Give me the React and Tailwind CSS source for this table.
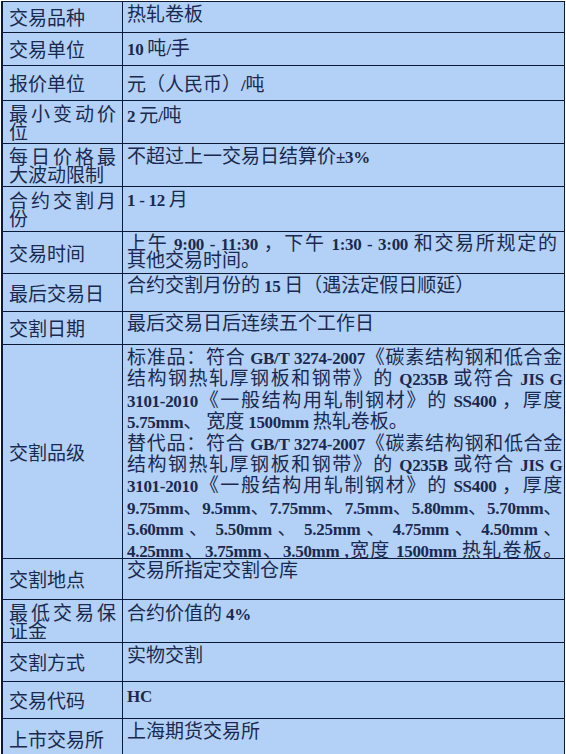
const J = (text) => ({ text, justify: true })

const rows = [
  { label: ['交易品种'], h: 'h-[31px]', pt: 'pt-[1px]', lines: ['热轧卷板'] },
  { label: ['交易单位'], h: 'h-[33px]', pt: 'pt-[4px]', lines: ['10 吨/手'] },
  { label: ['报价单位'], h: 'h-[35px]', pt: 'pt-[7px]', lines: ['元（人民币）/吨'] },
  { label: ['最小变动价', '位'], h: 'h-[43px]', pt: 'pt-[3px]', lines: ['2 元/吨'] },
  { label: ['每日价格最', '大波动限制'], h: 'h-[43px]', pt: 'pt-[1px]', lines: ['不超过上一交易日结算价±3%'] },
  { label: ['合约交割月', '份'], h: 'h-[45px]', pt: 'pt-[1px]', lines: ['1 - 12 月'] },
  {
    label: ['交易时间'], h: 'h-[42px]', pt: 'pt-[1px]', lh: 'h-[17px] leading-[17px]',
    lines: [J('上午 9:00 - 11:30 ，下午 1:30 - 3:00 和交易所规定的'), '其他交易时间。'],
  },
  { label: ['最后交易日'], h: 'h-[38px]', pt: 'pt-0', lines: ['合约交割月份的 15 日（遇法定假日顺延）'] },
  { label: ['交割日期'], h: 'h-[33px]', pt: 'pt-0', lines: ['最后交易日后连续五个工作日'] },
  {
    label: ['交割品级'], h: 'h-[214px]', pt: 'pt-0', lh: 'h-[21.4px] leading-[21.4px]',
    lines: [
      J('标准品：符合 GB/T 3274-2007《碳素结构钢和低合金'),
      J('结构钢热轧厚钢板和钢带》的 Q235B 或符合 JIS G'),
      J('3101-2010《一般结构用轧制钢材》的 SS400 ，厚度'),
      '5.75mm、 宽度 1500mm 热轧卷板。',
      J('替代品：符合 GB/T 3274-2007《碳素结构钢和低合金'),
      J('结构钢热轧厚钢板和钢带》的 Q235B 或符合 JIS G'),
      J('3101-2010《一般结构用轧制钢材》的 SS400 ，厚度'),
      J('9.75mm、9.5mm、7.75mm、7.5mm、5.80mm、5.70mm、'),
      J('5.60mm 、 5.50mm 、 5.25mm 、 4.75mm 、 4.50mm 、'),
      J('4.25mm、3.75mm、3.50mm ,宽度 1500mm 热轧卷板。'),
    ],
  },
  { label: ['交割地点'], h: 'h-[41px]', pt: 'pt-0', lines: ['交易所指定交割仓库'] },
  { label: ['最低交易保', '证金'], h: 'h-[43px]', pt: 'pt-[2px]', lines: ['合约价值的 4%'] },
  { label: ['交割方式'], h: 'h-[39px]', pt: 'pt-[1px]', lines: ['实物交割'] },
  { label: ['交易代码'], h: 'h-[37px]', pt: 'pt-[2px]', lines: ['HC'] },
  { label: ['上市交易所'], h: 'h-[40px]', pt: 'pt-[1px]', lines: ['上海期货交易所'] },
]

// latin runs use the bold serif, the rest stays in the cjk face
function Mixed({ text }) {
  const parts = text.split(/([\u0000-\u00ff]+)/)
  return parts.map((p, i) =>
    i % 2 === 1 ? (
      <span key={i} className="font-['Liberation_Serif',serif] font-bold text-[17px] tracking-[-0.3px] leading-none">{p}</span>
    ) : (
      <span key={i}>{p}</span>
    )
  )
}

function Row({ row }) {
  const lh = row.lh || 'h-[19px] leading-[19px]'
  return (
    <div className={`flex border-b border-[#0b1a36] ${row.h}`}>
      <div className="w-[120px] shrink-0 border-r border-[#0b1a36] px-[6px] flex flex-col justify-center text-[19px] leading-[18px]">
        {row.label.map((l, i) => (
          <div
            key={i}
            className={`h-[18px] ${i < row.label.length - 1 ? 'text-justify [text-align-last:justify]' : ''}`}
          >
            {l}
          </div>
        ))}
      </div>
      <div className={`flex-1 pl-[4px] pr-[7px] text-[19px] ${row.pt}`}>
        {row.lines.map((l, i) => {
          const text = typeof l === 'string' ? l : l.text
          const justify = typeof l === 'object' && l.justify
          return (
            <div
              key={i}
              className={`whitespace-nowrap ${lh} ${justify ? 'text-justify [text-align-last:justify]' : ''}`}
            >
              <Mixed text={text} />
            </div>
          )
        })}
      </div>
    </div>
  )
}

export default function App() {
  return (
    <div className="w-[566px] h-[754px] overflow-hidden bg-white font-['Noto_Sans_CJK_SC',sans-serif] text-[#1a2950]">
      <div className="ml-[1px] mt-[1px] w-[564px] bg-[#b3d1f6] border-l-2 border-t border-r border-[#0b1a36]">
        {rows.map((row, i) => (
          <Row key={i} row={row} />
        ))}
      </div>
    </div>
  )
}
